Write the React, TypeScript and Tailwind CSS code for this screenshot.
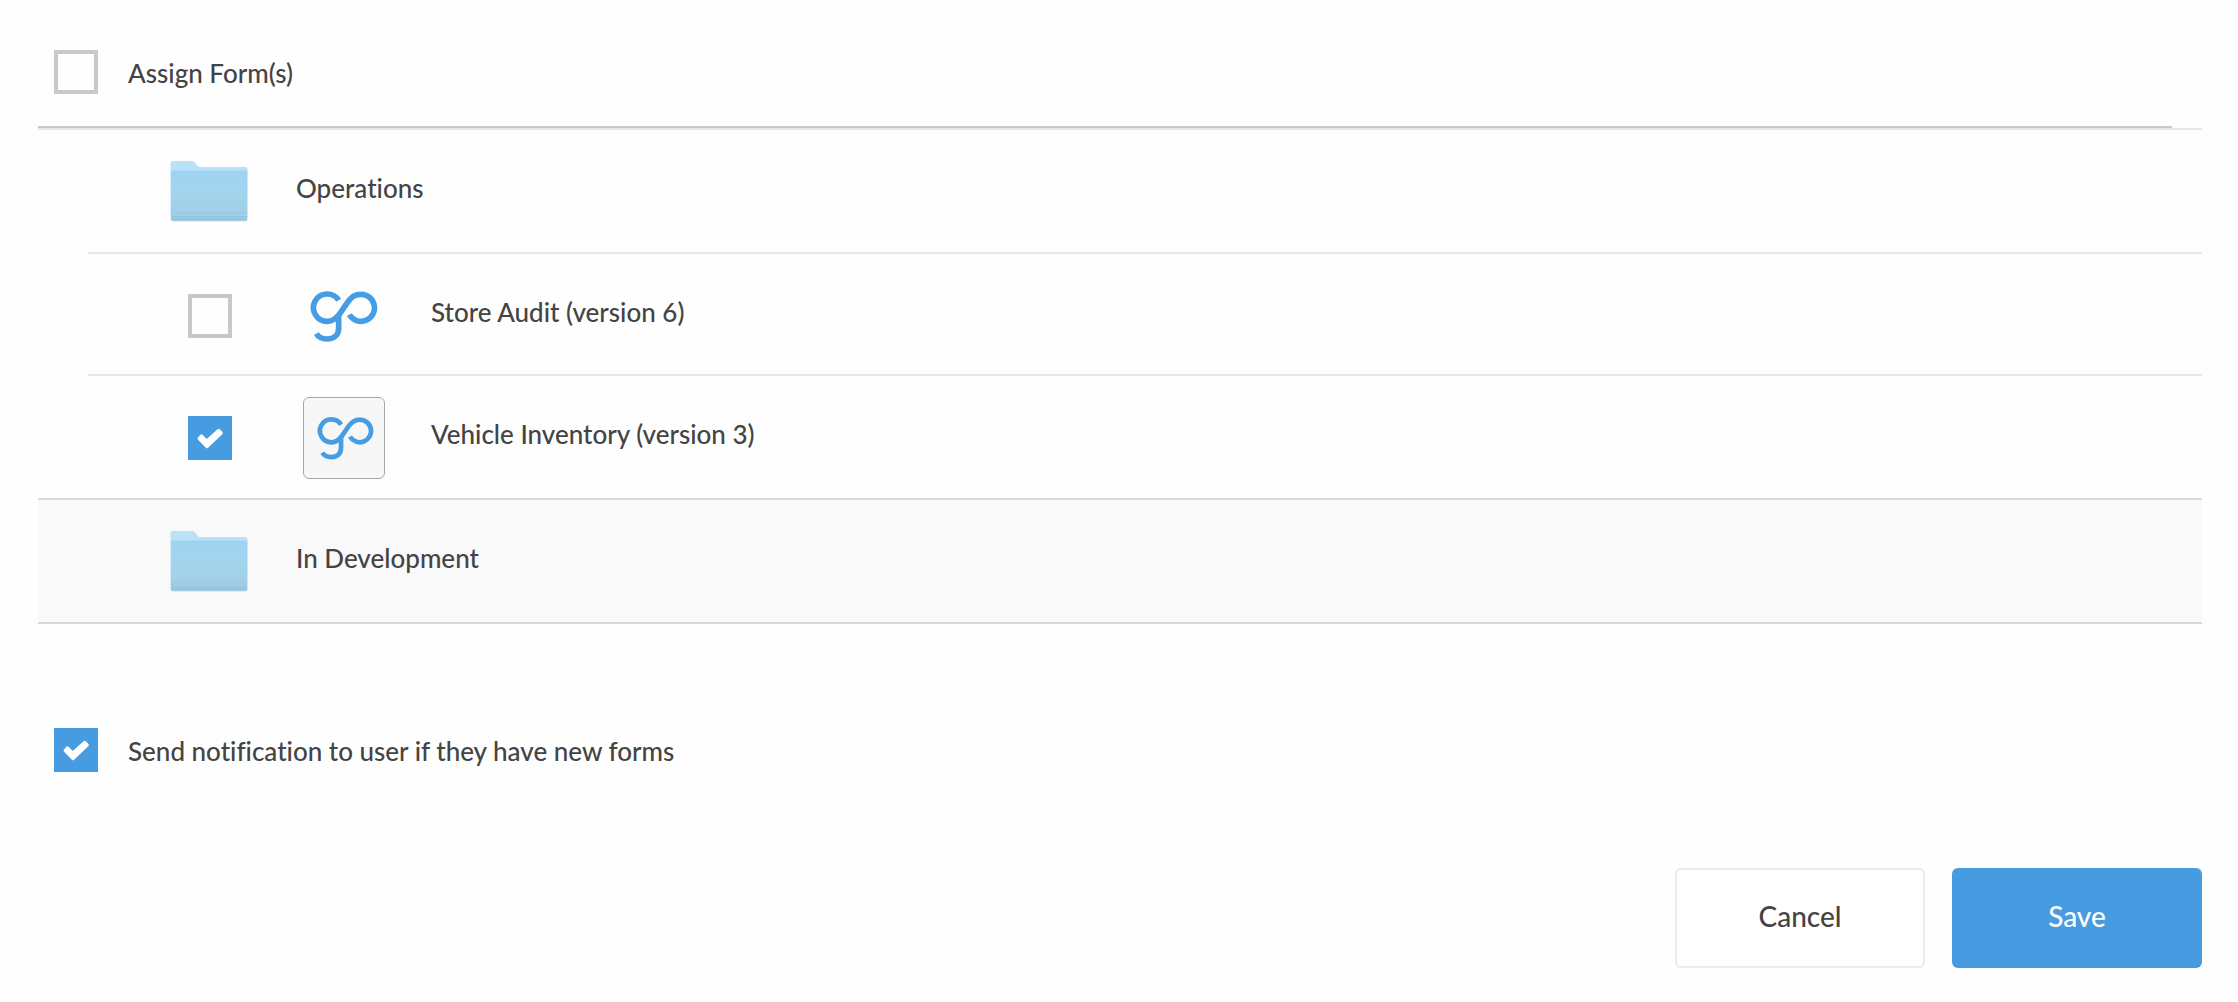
import { useState } from "react";

interface FormItem {
  id: string;
  label: string;
  framed: boolean;
}

const forms: FormItem[] = [
  { id: "store-audit", label: "Store Audit (version 6)", framed: false },
  { id: "vehicle-inventory", label: "Vehicle Inventory (version 3)", framed: true },
];

interface CheckboxProps {
  id: string;
  checked: boolean;
  onChange: (checked: boolean) => void;
}

function Checkbox({ id, checked, onChange }: CheckboxProps) {
  return (
    <span className="grid size-11 shrink-0">
      <input
        id={id}
        type="checkbox"
        checked={checked}
        onChange={(e) => onChange(e.target.checked)}
        className="peer col-start-1 row-start-1 size-11 cursor-pointer appearance-none border-4 border-[#c8c8c8] checked:border-[#479be1] checked:bg-[#479be1]"
      />
      <svg
        viewBox="0 0 44 44"
        aria-hidden="true"
        className="pointer-events-none invisible col-start-1 row-start-1 size-11 fill-white stroke-white peer-checked:visible"
      >
        <path
          d="M11.2 22.6 L13.4 20 L18.7 25.2 L30.6 14.4 L33.2 17 L19 30.6 Z"
          strokeWidth="3.2"
          strokeLinejoin="round"
        />
      </svg>
    </span>
  );
}

function FolderIcon() {
  return (
    <svg viewBox="0 0 78 62" aria-hidden="true" className="h-[62px] w-[78px] shrink-0">
      <defs>
        <linearGradient id="folder-front" x1="0" y1="0" x2="0" y2="1">
          <stop offset="0" stopColor="#9fd1f2" />
          <stop offset="0.35" stopColor="#a3d5f0" />
          <stop offset="0.75" stopColor="#a2d1e8" />
          <stop offset="1" stopColor="#97c5e0" />
        </linearGradient>
      </defs>
      <path
        d="M0.5 4 Q0.5 1 3.5 1 H22 Q24 1 25.3 2.8 L27.5 5.8 Q28.5 7 30 7 H75 Q77.7 7 77.7 10 V58 Q77.7 61.5 75 61.5 H3.5 Q0.5 61.5 0.5 58 Z"
        fill="#b9e1f7"
      />
      <path
        d="M1 13 Q1 10.4 3.5 10.4 H74.5 Q77 10.4 77 13 V58.5 Q77 61 74.5 61 H3.5 Q1 61 1 58.5 Z"
        fill="url(#folder-front)"
      />
      <path d="M1 55.5 H77 M1 58 H77 M2 60.5 H76" stroke="#a9d3ea" strokeWidth="0.8" />
      <path d="M1 56.8 H77 M1 59.2 H77" stroke="#8fbfdc" strokeWidth="0.8" />
    </svg>
  );
}

function GoLogo({ className }: { className: string }) {
  return (
    <svg viewBox="0 0 204 156" aria-hidden="true" className={className}>
      <g fill="none" stroke="#479de3" strokeWidth="17">
        <path d="M86 31 A41 41 0 1 0 52 94 C70 94 80 84 90 70 L110 41 C122 23 132 13 152 13 A40.5 40.5 0 1 1 118 74" />
        <path d="M86 76 V114 C86 136 72 147 51 147 C37 147 26 143 19 131" />
      </g>
    </svg>
  );
}

export default function App() {
  const [selected, setSelected] = useState<string[]>(["vehicle-inventory"]);
  const [notify, setNotify] = useState(true);

  const toggle = (id: string, checked: boolean) =>
    setSelected(checked ? [...selected, id] : selected.filter((s) => s !== id));

  return (
    <form
      onSubmit={(e) => e.preventDefault()}
      className="min-h-screen bg-[#fefefe] pt-[18px] pr-9 pb-8 pl-[38px] font-[Lato,sans-serif] text-[26px] leading-8 font-medium text-[#444444] [font-variant-ligatures:none]"
    >
      <div className="mr-[30px] flex h-[110px] items-center gap-[30px] border-b-2 border-[#c9c9c9] pl-4">
        <Checkbox
          id="assign-all"
          checked={selected.length === forms.length}
          onChange={(checked) => setSelected(checked ? forms.map((f) => f.id) : [])}
        />
        <label htmlFor="assign-all" className="pt-0.5">
          Assign Form(s)
        </label>
      </div>

      <section>
        <div className="flex h-[124px] items-center gap-12 border-t-2 border-[#e8e8e8] pl-[132px]">
          <FolderIcon />
          <h2 className="pb-1.5">Operations</h2>
        </div>
        <ul className="pl-[50px]">
          {forms.map((form) => (
            <li
              key={form.id}
              className="border-t-2 border-[#e8e8e8] pt-5 pb-4 pl-[100px] last:pb-[18px]"
            >
              <div className="flex h-[84px] items-center">
                <Checkbox
                  id={form.id}
                  checked={selected.includes(form.id)}
                  onChange={(checked) => toggle(form.id, checked)}
                />
                <span
                  className={
                    form.framed
                      ? "mr-[46px] ml-[71px] grid size-[82px] place-items-center rounded-md border border-[#a8a8a8] bg-[#f7f7f7] pl-0.5"
                      : "mr-[46px] ml-[71px] grid size-[82px] place-items-center"
                  }
                >
                  <GoLogo className={form.framed ? "w-[57px]" : "w-[68px]"} />
                </span>
                <label htmlFor={form.id} className="pb-2">
                  {form.label}
                </label>
              </div>
            </li>
          ))}
        </ul>
      </section>

      <section className="flex h-[126px] items-center gap-12 border-y-2 border-[#d4dade] bg-[#f9f9f9] pl-[132px]">
        <FolderIcon />
        <h2 className="pb-1.5">In Development</h2>
      </section>

      <div className="mt-[104px] flex items-center gap-[30px] pl-4">
        <Checkbox id="notify" checked={notify} onChange={setNotify} />
        <label htmlFor="notify" className="pt-0.5">
          Send notification to user if they have new forms
        </label>
      </div>

      <div className="mt-24 flex justify-end gap-[27px] text-[28px]">
        <button
          type="button"
          className="h-[100px] w-[250px] cursor-pointer rounded-md border-2 border-[#e8eaeb] bg-white pb-1"
        >
          Cancel
        </button>
        <button
          type="submit"
          className="h-[100px] w-[250px] cursor-pointer rounded-md bg-[#479be1] pb-1 text-white"
        >
          Save
        </button>
      </div>
    </form>
  );
}
